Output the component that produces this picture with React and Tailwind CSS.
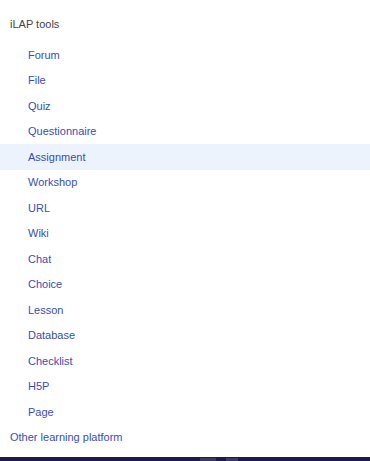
const TOOLS = [
  'Forum',
  'File',
  'Quiz',
  'Questionnaire',
  'Assignment',
  'Workshop',
  'URL',
  'Wiki',
  'Chat',
  'Choice',
  'Lesson',
  'Database',
  'Checklist',
  'H5P',
  'Page',
];

export default function App() {
  return (
    <div className="w-[370px] h-[461px] bg-white flex flex-col overflow-hidden font-['Liberation_Sans',Arial,sans-serif] text-[11px]">
      <div className="flex-1 pt-[11.5px]">
        {/* section heading */}
        <div className="h-[25.5px] flex items-center pl-[10px] text-[#444444]">iLAP tools</div>

        <ul className="mt-[5.25px]">
          {TOOLS.map((name) => (
            <li
              key={name}
              className={`h-[25.5px] flex items-center pl-[28px] text-[#3a4db3] ${
                name === 'Assignment' ? 'bg-[#edf3fc]' : ''
              }`}
            >
              {name}
            </li>
          ))}
          <li className="h-[25.5px] flex items-center pl-[10px] text-[#3a4db3]">Other learning platform</li>
        </ul>
      </div>

      {/* footer strip peeking in */}
      <div className="h-[4px] bg-[#1b1d42] flex pl-[200px] gap-[10px]">
        <span className="mt-[1px] w-[16px] h-[3px] bg-[#3a3c5c]" />
        <span className="mt-[1px] w-[12px] h-[3px] bg-[#3a3c5c]" />
      </div>
    </div>
  );
}
